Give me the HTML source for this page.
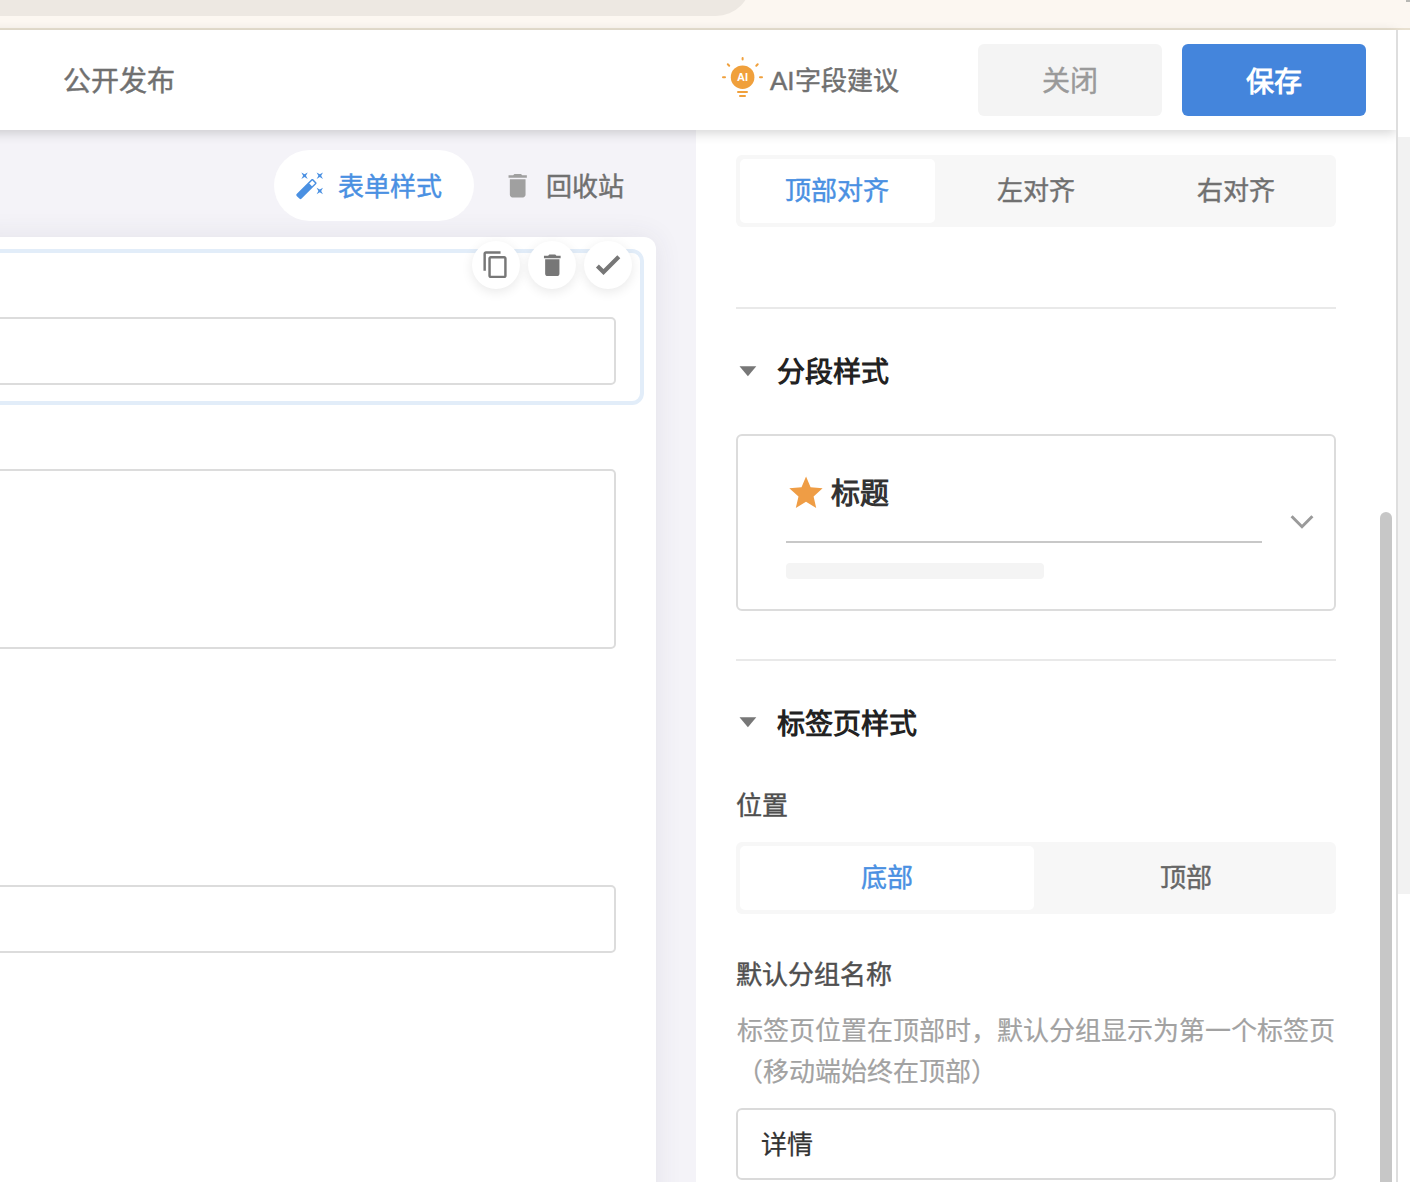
<!DOCTYPE html>
<html lang="zh-CN">
<head>
<meta charset="utf-8">
<style>
*{box-sizing:border-box;margin:0;padding:0}
html,body{width:1410px;height:1182px;overflow:hidden;background:#fff;font-family:"Liberation Sans",sans-serif}
.a{position:absolute}
.t{position:absolute;white-space:nowrap;line-height:1;-webkit-text-stroke:0.45px currentColor}
.b{font-weight:bold;-webkit-text-stroke:0}
</style>
</head>
<body>
<!-- top browser strip -->
<div class="a" style="left:0;top:0;width:1410px;height:28px;background:#fcf7f1"></div>
<div class="a" style="left:-40px;top:-40px;width:791px;height:56px;background:#ede8e2;border-radius:0 0 35px 0"></div>
<div class="a" style="left:0;top:28px;width:1410px;height:2px;background:#e9e1d1"></div>
<div class="a" style="left:1406px;top:0;width:4px;height:1.5px;background:#b8b8b4"></div>

<!-- left canvas -->
<div class="a" style="left:0;top:130px;width:696px;height:1052px;background:#f4f3f8"></div>

<!-- form card -->
<div class="a" style="left:-30px;top:237px;width:686px;height:1000px;background:#fff;border-radius:12px;box-shadow:0 0 28px rgba(50,50,90,0.09)"></div>
<div class="a" style="left:-30px;top:248.7px;width:674px;height:156.3px;border:4px solid #e2edf9;border-radius:12px"></div>
<div class="a" style="left:-30px;top:317px;width:645.5px;height:68px;border:2px solid #dcdcdc;border-radius:5px"></div>
<div class="a" style="left:-30px;top:468.7px;width:645.5px;height:180.3px;border:2px solid #dcdcdc;border-radius:5px"></div>
<div class="a" style="left:-30px;top:884.8px;width:645.5px;height:68.2px;border:2px solid #dcdcdc;border-radius:5px"></div>

<!-- action circles -->
<div class="a" style="left:472px;top:240.6px;width:48px;height:48px;border-radius:50%;background:#fff;box-shadow:0 3px 12px rgba(0,0,0,0.09)"></div>
<div class="a" style="left:528px;top:240.6px;width:48px;height:48px;border-radius:50%;background:#fff;box-shadow:0 3px 12px rgba(0,0,0,0.09)"></div>
<div class="a" style="left:584px;top:240.6px;width:48px;height:48px;border-radius:50%;background:#fff;box-shadow:0 3px 12px rgba(0,0,0,0.09)"></div>
<svg class="a" style="left:480.9px;top:250.4px" width="29.3" height="29.3" viewBox="0 0 24 24"><path fill="#777" d="M16 1H4c-1.1 0-2 .9-2 2v14h2V3h12V1zm3 4H8c-1.1 0-2 .9-2 2v14c0 1.1.9 2 2 2h11c1.1 0 2-.9 2-2V7c0-1.1-.9-2-2-2zm0 16H8V7h11v14z"/></svg>
<svg class="a" style="left:537.9px;top:250.5px" width="28.6" height="28.6" viewBox="0 0 24 24"><path fill="#777" d="M6 19c0 1.1.9 2 2 2h8c1.1 0 2-.9 2-2V7H6v12zM19 4h-3.5l-1-1h-5l-1 1H5v2h14V4z"/></svg>
<svg class="a" style="left:580px;top:240px" width="50" height="50" viewBox="580 240 50 50"><path fill="none" stroke="#777" stroke-width="4.2" d="M597.4 265.9L603.5 272 618.8 256.7"/></svg>

<!-- toolbar -->
<div class="a" style="left:274px;top:150px;width:200px;height:71px;background:#fff;border-radius:36px"></div>
<svg class="a" style="left:295.4px;top:169.7px" width="30.5" height="30.5" viewBox="0 0 24 24"><path fill="#4a90e2" d="M7.5 5.6L10 7 8.6 4.5 10 2 7.5 3.4 5 2l1.4 2.5L5 7zm12 9.8L17 14l1.4 2.5L17 19l2.5-1.4L22 19l-1.4-2.5L22 14zM22 2l-2.5 1.4L17 2l1.4 2.5L17 7l2.5-1.4L22 7l-1.4-2.5zm-7.63 5.29c-.39-.39-1.02-.39-1.41 0L1.29 18.960c-.39.39-.39 1.020 0 1.41l2.34 2.34c.39.39 1.02.39 1.41 0L16.7 11.05c.39-.39.39-1.02 0-1.41l-2.33-2.35zm-1.03 5.49l-2.12-2.12 2.44-2.44 2.12 2.12-2.44 2.440z"/></svg>
<div class="t" style="left:337.7px;top:173.8px;font-size:26px;color:#4a90e2">表单样式</div>
<svg class="a" style="left:502.25px;top:170px" width="31.4" height="31.4" viewBox="0 0 24 24"><path fill="#a0a0a0" d="M6 19c0 1.1.9 2 2 2h8c1.1 0 2-.9 2-2V7H6v12zM19 4h-3.5l-1-1h-5l-1 1H5v2h14V4z"/></svg>
<div class="t" style="left:545.5px;top:174px;font-size:26px;color:#707070">回收站</div>

<div class="a" style="left:696px;top:130px;width:700px;height:1052px;background:#fff"></div>
<!-- right panel -->
<div class="a" style="left:736px;top:155px;width:600px;height:72px;background:#f7f7f7;border-radius:6px"></div>
<div class="a" style="left:740px;top:159px;width:195px;height:64px;background:#fff;border-radius:5px"></div>
<div class="t" style="left:737px;top:178px;width:200px;text-align:center;font-size:26px;color:#4a90e2">顶部对齐</div>
<div class="t" style="left:936px;top:178px;width:200px;text-align:center;font-size:26px;color:#707070">左对齐</div>
<div class="t" style="left:1136px;top:178px;width:200px;text-align:center;font-size:26px;color:#707070">右对齐</div>

<div class="a" style="left:736px;top:307px;width:600px;height:2px;background:#e9e9e9"></div>
<svg class="a" style="left:739px;top:365.8px" width="18" height="11" viewBox="0 0 18 11"><path fill="#777" d="M0.5 0.3H17.3L8.9 10.3z"/></svg>
<div class="t b" style="left:777px;top:359px;font-size:28px;color:#222;">分段样式</div>

<div class="a" style="left:736px;top:433.5px;width:600px;height:177px;border:2px solid #dcdcdc;border-radius:6px"></div>
<svg class="a" style="left:780px;top:468px" width="50" height="47" viewBox="0 0 50 47"><path fill="#ef9d45" d="M26.05 8.6L30.6 19.3 42.6 20.3 33.6 28.4 36.2 40 26 33.8 15.8 40 18.5 28.4 9.3 20.3 21.5 19.3z"/></svg>
<div class="t b" style="left:830.5px;top:479.5px;font-size:29px;color:#333;">标题</div>
<div class="a" style="left:786px;top:540.5px;width:476px;height:2px;background:#c8c8c8"></div>
<div class="a" style="left:786px;top:563px;width:258px;height:15.5px;background:#f4f4f4;border-radius:4px"></div>
<svg class="a" style="left:1289px;top:512px" width="26" height="18" viewBox="0 0 26 18"><path fill="none" stroke="#9a9a9a" stroke-width="3" d="M2.6 4.3L13 14.7 23.4 4.3"/></svg>

<div class="a" style="left:736px;top:659px;width:600px;height:2px;background:#e9e9e9"></div>
<svg class="a" style="left:739px;top:717.3px" width="18" height="11" viewBox="0 0 18 11"><path fill="#777" d="M0.5 0.3H17.3L8.9 10.3z"/></svg>
<div class="t b" style="left:777px;top:711px;font-size:28px;color:#222;">标签页样式</div>

<div class="t" style="left:736px;top:792.5px;font-size:26px;color:#4f4f4f">位置</div>
<div class="a" style="left:736px;top:842px;width:600px;height:71.5px;background:#f7f7f7;border-radius:6px"></div>
<div class="a" style="left:740px;top:846px;width:294px;height:64px;background:#fff;border-radius:5px"></div>
<div class="t" style="left:737px;top:865px;width:300px;text-align:center;font-size:26px;color:#4a90e2">底部</div>
<div class="t" style="left:1036px;top:865px;width:300px;text-align:center;font-size:26px;color:#666">顶部</div>

<div class="t" style="left:736px;top:961.5px;font-size:26px;color:#4f4f4f">默认分组名称</div>
<div class="t" style="left:737px;top:1017.5px;font-size:26px;color:#a2a2a2;-webkit-text-stroke:0.2px #a2a2a2">标签页位置在顶部时，默认分组显示为第一个标签页</div>
<div class="t" style="left:737px;top:1059px;font-size:26px;color:#a2a2a2;-webkit-text-stroke:0.2px #a2a2a2">（移动端始终在顶部）</div>
<div class="a" style="left:736px;top:1108px;width:600px;height:72px;border:2px solid #dadada;border-radius:6px"></div>
<div class="t" style="left:761px;top:1131.5px;font-size:26px;color:#333;-webkit-text-stroke:0.25px #333">详情</div>

<!-- header -->
<div class="a" style="left:-20px;top:30px;width:1416px;height:100px;background:#fff;box-shadow:0 3px 11px rgba(0,0,0,0.17)"></div>
<div class="t" style="left:63px;top:68px;font-size:28px;color:#707070">公开发布</div>

<!-- AI icon -->
<svg class="a" style="left:718px;top:54px" width="50" height="46" viewBox="0 0 50 46">
  <g fill="#f0a03c">
    <circle cx="24.6" cy="23.2" r="11.8"/>
    <rect x="23.6" y="3" width="2" height="3.5" rx="1"/>
    <rect x="4" y="22.2" width="4" height="2" rx="1"/>
    <rect x="41" y="22.2" width="4" height="2" rx="1"/>
    <rect x="9.5" y="9" width="2" height="4" rx="1" transform="rotate(-45 10.5 11)"/>
    <rect x="38" y="9" width="2" height="4" rx="1" transform="rotate(45 39 11)"/>
    <rect x="19" y="37" width="11" height="2" rx="1"/>
    <rect x="21" y="41" width="7" height="2" rx="1"/>
  </g>
  <text x="24.6" y="27.3" font-size="11" font-weight="bold" fill="#fff" text-anchor="middle" font-family="Liberation Sans">AI</text>
</svg>
<div class="t" style="left:770px;top:67.5px;font-size:26px;color:#707070">AI字段建议</div>

<div class="a" style="left:978px;top:44px;width:184px;height:72px;background:#f4f4f4;border-radius:6px"></div>
<div class="t" style="left:978px;top:67.5px;width:184px;text-align:center;font-size:28px;color:#9a9a9a">关闭</div>
<div class="a" style="left:1182px;top:44px;width:184px;height:72px;background:#4485dc;border-radius:6px"></div>
<div class="t b" style="left:1182px;top:68.5px;width:184px;text-align:center;font-size:28px;color:#fff;">保存</div>


<!-- right scrollbar strip -->
<div class="a" style="left:1396px;top:30px;width:14px;height:1152px;background:#fff"></div>
<div class="a" style="left:1396px;top:30px;width:2px;height:1152px;background:#dedede"></div>
<div class="a" style="left:1398px;top:137px;width:12px;height:757px;background:#f2f2f2"></div>
<div class="a" style="left:1380px;top:512px;width:12px;height:700px;background:#c7c7c7;border-radius:6px"></div>

</body>
</html>
